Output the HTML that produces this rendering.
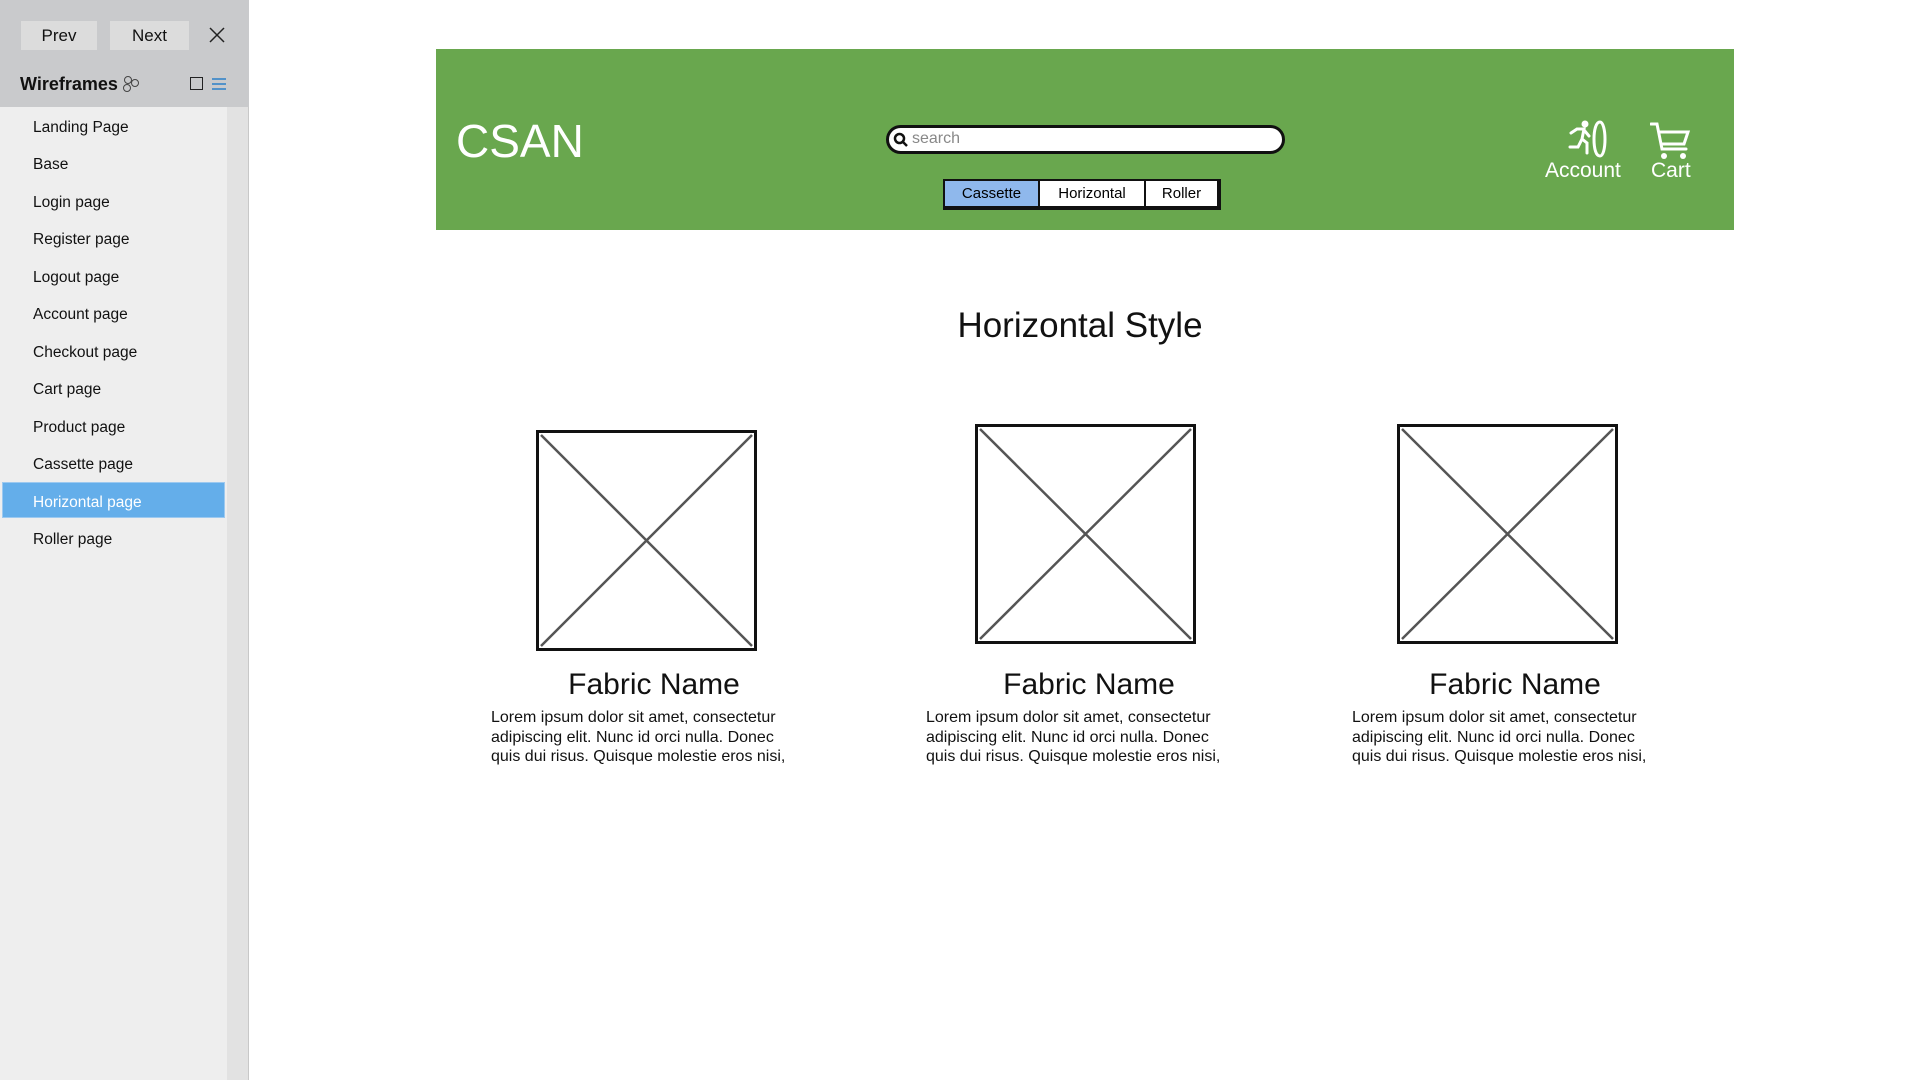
<!DOCTYPE html>
<html><head><meta charset="utf-8"><style>
*{margin:0;padding:0;box-sizing:border-box}
body{width:1920px;height:1080px;position:relative;background:#fff;font-family:"Liberation Sans",sans-serif;overflow:hidden}
.a{position:absolute}
#side{left:0;top:0;width:249px;height:1080px;background:#eeeeee;border-right:1px solid #c8c8c8}
#top{left:0;top:0;width:249px;height:107px;background:#c9cacc}
.btn{top:21px;height:29px;background:#dcdcdc;font-size:17px;color:#111;text-align:center;line-height:29px}
.it{left:33px;font-size:15.5px;color:#111;line-height:37px}
.tx{white-space:nowrap}
.lor{font-size:16px;line-height:19.5px;color:#111;white-space:nowrap}
.fn{font-size:30px;color:#111;text-align:center;width:400px}
</style></head><body>
<div id="side" class="a"></div>
<div id="top" class="a"></div>
<div class="a btn" style="left:21px;width:76px">Prev</div>
<div class="a btn" style="left:110px;width:79px">Next</div>
<svg class="a" style="left:209px;top:27px" width="16" height="16"><path d="M1 1L15 15M15 1L1 15" stroke="#222" stroke-width="1.5"/></svg>
<div class="a tx" style="left:20px;top:74px;font-size:18px;font-weight:bold;color:#111">Wireframes</div>
<svg class="a" style="left:122px;top:74px" width="20" height="20"><circle cx="6" cy="6" r="3.5" fill="none" stroke="#444"/><circle cx="13" cy="9" r="3.5" fill="none" stroke="#444"/><circle cx="5" cy="14" r="3.5" fill="none" stroke="#444"/></svg>
<div class="a" style="left:190px;top:77px;width:13px;height:13px;border:1.5px solid #222"></div>
<svg class="a" style="left:212px;top:77px" width="14" height="14"><path d="M0 2H14M0 7H14M0 12H14" stroke="#2a7fc8" stroke-width="1.5"/></svg>
<div class="a" style="left:227px;top:107px;width:21px;height:973px;background:#e2e2e2"></div>
<div class="a" style="left:2px;top:482px;width:223px;height:36px;background:#64aeea;border:1px solid #9cc9f0"></div>
<div class="a it" style="top:109px">Landing Page</div>
<div class="a it" style="top:146px">Base</div>
<div class="a it" style="top:184px">Login page</div>
<div class="a it" style="top:221px">Register page</div>
<div class="a it" style="top:259px">Logout page</div>
<div class="a it" style="top:296px">Account page</div>
<div class="a it" style="top:334px">Checkout page</div>
<div class="a it" style="top:371px">Cart page</div>
<div class="a it" style="top:409px">Product page</div>
<div class="a it" style="top:446px">Cassette page</div>
<div class="a it" style="top:484px;color:#fff">Horizontal page</div>
<div class="a it" style="top:521px">Roller page</div>

<div class="a" style="left:436px;top:49px;width:1298px;height:181px;background:#69a74e"></div>
<div class="a tx" style="left:456px;top:114px;font-size:46px;color:#fff">CSAN</div>
<div class="a" style="left:886px;top:125px;width:399px;height:29px;background:#fff;border:3px solid #111;border-radius:15px"></div>
<svg class="a" style="left:893px;top:132px" width="16" height="16"><circle cx="6.5" cy="6.5" r="4.5" fill="none" stroke="#111" stroke-width="2.5"/><path d="M10 10L14 14" stroke="#111" stroke-width="2.5"/></svg>
<div class="a tx" style="left:912px;top:130px;font-size:16px;color:#888">search</div>
<div class="a" style="left:943px;top:179px;width:278px;height:31px;background:#111"></div>
<div class="a" style="left:945px;top:181px;width:93px;height:25px;background:#8fb8ec;font-size:15px;text-align:center;line-height:25px">Cassette</div>
<div class="a" style="left:1040px;top:181px;width:104px;height:25px;background:#fff;font-size:15px;text-align:center;line-height:25px">Horizontal</div>
<div class="a" style="left:1146px;top:181px;width:71px;height:25px;background:#fff;font-size:15px;text-align:center;line-height:25px">Roller</div>
<svg class="a" style="left:1567px;top:119px" width="42" height="42" fill="none" stroke="#fff" stroke-width="3" stroke-linecap="round"><circle cx="18" cy="5" r="3.5" fill="#fff" stroke="none"/><path d="M4 14L10 10H17L15 20L20 24V34M15 20L11 28H3M17 11L22 17M33 3C29 3 27 11 27 20C27 30 29 37 33 37C36 37 38 30 38 20C38 11 36 3 33 3Z"/></svg>
<div class="a tx" style="left:1545px;top:159px;font-size:21px;color:#fff">Account</div>
<svg class="a" style="left:1650px;top:122px" width="42" height="38" fill="none" stroke="#fff" stroke-width="3" stroke-linecap="round"><path d="M1 2H7L12 27H36M9 10H38L34 22H11"/><circle cx="14" cy="34" r="3" fill="#fff" stroke="none"/><circle cx="33" cy="34" r="3" fill="#fff" stroke="none"/></svg>
<div class="a tx" style="left:1651px;top:159px;font-size:21px;color:#fff">Cart</div>

<div class="a" style="left:880px;top:306px;width:400px;text-align:center;font-size:35px;color:#111">Horizontal Style</div>

<svg class="a" style="left:536px;top:430px" width="221" height="221"><rect x="1.5" y="1.5" width="218" height="218" fill="#fff" stroke="#111" stroke-width="3"/><path d="M5 5L216 216M216 5L5 216" stroke="#555" stroke-width="2.5"/></svg>
<svg class="a" style="left:975px;top:424px" width="221" height="220"><rect x="1.5" y="1.5" width="218" height="217" fill="#fff" stroke="#111" stroke-width="3"/><path d="M5 5L216 215M216 5L5 215" stroke="#555" stroke-width="2.5"/></svg>
<svg class="a" style="left:1397px;top:424px" width="221" height="220"><rect x="1.5" y="1.5" width="218" height="217" fill="#fff" stroke="#111" stroke-width="3"/><path d="M5 5L216 215M216 5L5 215" stroke="#555" stroke-width="2.5"/></svg>

<div class="a fn" style="left:454px;top:668px">Fabric Name</div>
<div class="a fn" style="left:889px;top:668px">Fabric Name</div>
<div class="a fn" style="left:1315px;top:668px">Fabric Name</div>
<div class="a lor" style="left:491px;top:708px">Lorem ipsum dolor sit amet, consectetur<br>adipiscing elit. Nunc id orci nulla. Donec<br>quis dui risus. Quisque molestie eros nisi,</div>
<div class="a lor" style="left:926px;top:708px">Lorem ipsum dolor sit amet, consectetur<br>adipiscing elit. Nunc id orci nulla. Donec<br>quis dui risus. Quisque molestie eros nisi,</div>
<div class="a lor" style="left:1352px;top:708px">Lorem ipsum dolor sit amet, consectetur<br>adipiscing elit. Nunc id orci nulla. Donec<br>quis dui risus. Quisque molestie eros nisi,</div>
</body></html>
